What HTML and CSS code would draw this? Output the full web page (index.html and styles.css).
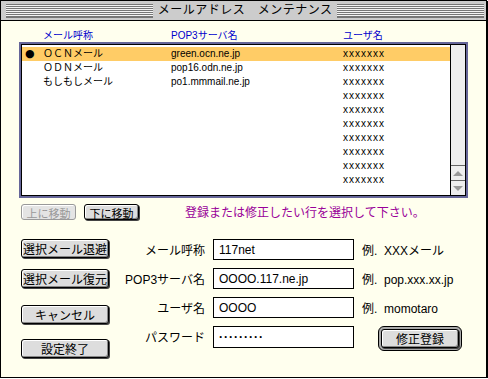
FILE: index.html
```html
<!DOCTYPE html>
<html lang="ja">
<head>
  <meta charset="UTF-8">
  <title>メールアドレス メンテナンス</title>
  <link rel="stylesheet" href="styles.css">
</head>
<body>

  <div class="window">
    <!-- タイトルバー -->
    <div class="titlebar">
      <span class="stripes"></span>
      <span class="title">メールアドレス　メンテナンス</span>
      <span class="stripes"></span>
    </div>

    <div class="content">
      <!-- 一覧 -->
      <div class="list-head">
        <span></span>
        <span>メール呼称</span>
        <span>POP3サーバ名</span>
        <span>ユーザ名</span>
      </div>
      <div class="list">
        <div class="rows">
          <div class="row selected"><span class="mark">●</span><span>ＯＣＮメール</span><span>green.ocn.ne.jp</span><span class="user">xxxxxxx</span></div>
          <div class="row"><span></span><span>ＯＤＮメール</span><span>pop16.odn.ne.jp</span><span class="user">xxxxxxx</span></div>
          <div class="row"><span></span><span>もしもしメール</span><span>po1.mmmail.ne.jp</span><span class="user">xxxxxxx</span></div>
          <div class="row"><span></span><span></span><span></span><span class="user">xxxxxxx</span></div>
          <div class="row"><span></span><span></span><span></span><span class="user">xxxxxxx</span></div>
          <div class="row"><span></span><span></span><span></span><span class="user">xxxxxxx</span></div>
          <div class="row"><span></span><span></span><span></span><span class="user">xxxxxxx</span></div>
          <div class="row"><span></span><span></span><span></span><span class="user">xxxxxxx</span></div>
          <div class="row"><span></span><span></span><span></span><span class="user">xxxxxxx</span></div>
          <div class="row"><span></span><span></span><span></span><span class="user">xxxxxxx</span></div>
        </div>
        <div class="scrollbar">
          <div class="arrow"><span class="tri up"></span></div>
          <div class="arrow"><span class="tri down"></span></div>
        </div>
      </div>

      <!-- 移動ボタン -->
      <div class="move-bar">
        <button class="btn small" disabled>上に移動</button>
        <button class="btn small">下に移動</button>
        <p class="message">登録または修正したい行を選択して下さい。</p>
      </div>

      <!-- 入力フォーム -->
      <div class="form-area">
        <div class="side-buttons">
          <button class="btn side">選択メール退避</button>
          <button class="btn side">選択メール復元</button>
          <button class="btn side cancel">キャンセル</button>
          <button class="btn side finish">設定終了</button>
        </div>
        <div class="fields">
          <label>メール呼称</label>
          <input class="field" type="text" value="117net">
          <span class="example">例.&nbsp; XXXメール</span>

          <label>POP3サーバ名</label>
          <input class="field" type="text" value="OOOO.117.ne.jp">
          <span class="example">例.&nbsp; pop.xxx.xx.jp</span>

          <label>ユーザ名</label>
          <input class="field" type="text" value="OOOO">
          <span class="example">例.&nbsp; momotaro</span>

          <label>パスワード</label>
          <input class="field password" type="text" value="·········">
          <span class="default-ring"><button class="btn default">修正登録</button></span>
        </div>
      </div>
    </div>
  </div>

</body>
</html>
```

FILE: styles.css
```css
body {
  margin: 0;
  background-color: #fff;
  font-family: "Liberation Sans", "Noto Sans CJK JP", sans-serif;
  font-size: 12px;
  color: #000;
}
.window {
  width: 485px;
  height: 376px;
  border: 1px solid #000;
  box-shadow: 1px 1px 0 #000;
  background-color: #ffffee;
  display: flex;
  flex-direction: column;
}

/* タイトルバー */
.titlebar {
  height: 19px;
  background-color: #cccccc;
  border-bottom: 1px solid #000;
  display: flex;
  align-items: center;
  padding: 0 2px 0 5px;
}
.stripes {
  flex: 1;
  height: 13px;
  background: repeating-linear-gradient(#777 0 1px, #f4f4f4 1px 2px);
  border-bottom: 1px solid #777;
}
.title {
  padding: 0 5px;
  line-height: 19px;
  letter-spacing: 0.5px;
}

/* 一覧 */
.content {
  flex: 1;
  padding: 9px 0 0 18px;
}
.list-head,
.row {
  display: grid;
  grid-template-columns: 21px 128px 172px 1fr;
  font-size: 10px;
}
.list-head {
  padding-left: 3px;
  width: 428px;
  color: #0000cc;
  height: 12px;
  line-height: 12px;
  margin-bottom: 1px;
}
.list {
  width: 443px;
  height: 150px;
  border: 1px solid #000;
  box-shadow: 0 0 0 2px #666699;
  margin-left: 2px;
  margin-top: 2px;
  background-color: #fff;
  display: flex;
}
.rows {
  flex: 1;
  padding-top: 2px;
}
.row {
  height: 14px;
  line-height: 14px;
}
.row.selected {
  background-color: #ffcc66;
}
.mark {
  font-family: "DejaVu Sans", sans-serif;
  font-size: 11px;
  line-height: 14px;
  padding-left: 3px;
}
.user {
  letter-spacing: 1px;
  font-size: 10px;
}
.scrollbar {
  width: 14px;
  border-left: 1px solid #000;
  background-color: #eeeeee;
  display: flex;
  flex-direction: column;
  justify-content: flex-end;
}
.arrow {
  height: 14px;
  border-top: 1px solid #666;
  display: flex;
  align-items: center;
  justify-content: center;
}
.tri {
  width: 0;
  height: 0;
  border-left: 5px solid transparent;
  border-right: 5px solid transparent;
}
.tri.up {
  border-bottom: 5px solid #999;
}
.tri.down {
  border-top: 5px solid #999;
}

/* ボタン */
.btn {
  font-family: inherit;
  background-color: #dddddd;
  border: 1px solid #000;
  border-radius: 3px;
  box-shadow: inset 1px 1px 0 #fff, inset -1px -1px 0 #888, 1px 1px 0 #444;
  padding: 0;
  color: #000;
}
.btn.small {
  width: 55px;
  height: 16px;
  font-size: 11px;
  margin-left: 2px;
}
.btn.small + .btn.small {
  margin-left: 8px;
}
.btn:disabled {
  color: #999;
  border-color: #999;
  box-shadow: inset 1px 1px 0 #fff;
  background-color: #e4e4e4;
}
.move-bar {
  display: flex;
  align-items: center;
  margin-top: 7px;
}
.message {
  margin: 0 0 0 46px;
  color: #990099;
  font-size: 12px;
}

/* 入力フォーム */
.form-area {
  display: flex;
  margin-top: 19px;
}
.side-buttons {
  width: 91px;
  display: flex;
  flex-direction: column;
}
.btn.side {
  width: 88px;
  height: 19px;
  margin-left: 2px;
  font-size: 12px;
  margin-bottom: 11px;
}
.btn.cancel {
  margin-top: 6px;
}
.btn.finish {
  margin-top: 4px;
}
.fields {
  display: grid;
  grid-template-columns: 95px 141px auto;
  grid-template-rows: repeat(4, 21px);
  column-gap: 8px;
  row-gap: 8px;
  align-items: center;
}
.fields label {
  text-align: right;
}
.field {
  box-sizing: border-box;
  width: 141px;
  height: 21px;
  border: 1px solid #000;
  background-color: #fff;
  font-family: inherit;
  font-size: 12px;
  padding: 0 5px;
  outline: none;
}
.field.password {
  height: 22px;
  letter-spacing: 1px;
  font-weight: bold;
}
.example {
  white-space: nowrap;
}
.default-ring {
  align-self: start;
  justify-self: start;
  margin-left: 16px;
  border: 1px solid #000;
  border-radius: 6px;
  padding: 2px;
  background-color: #aaa;
  display: flex;
}
.btn.default {
  width: 78px;
  height: 19px;
  font-size: 12px;
}
```
